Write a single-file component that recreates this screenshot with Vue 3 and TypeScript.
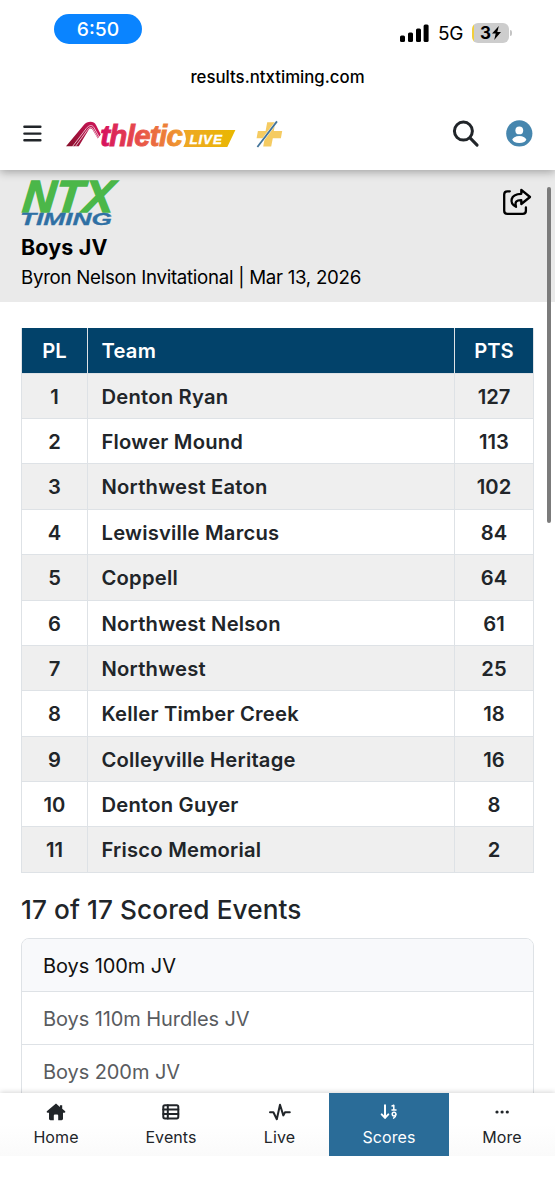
<script setup lang="ts">
interface TeamScore {
  team: string
  pts: number
}

const teams: TeamScore[] = [
  { team: 'Denton Ryan', pts: 127 },
  { team: 'Flower Mound', pts: 113 },
  { team: 'Northwest Eaton', pts: 102 },
  { team: 'Lewisville Marcus', pts: 84 },
  { team: 'Coppell', pts: 64 },
  { team: 'Northwest Nelson', pts: 61 },
  { team: 'Northwest', pts: 25 },
  { team: 'Keller Timber Creek', pts: 18 },
  { team: 'Colleyville Heritage', pts: 16 },
  { team: 'Denton Guyer', pts: 8 },
  { team: 'Frisco Memorial', pts: 2 },
]

const events: string[] = ['Boys 100m JV', 'Boys 110m Hurdles JV', 'Boys 200m JV']
</script>

<template>
  <div class="screen">
    <div class="status">
      <span class="clock">6:50</span>
      <div class="status-right">
        <svg class="signal" width="29" height="19" viewBox="0 0 29 19">
          <rect x="0" y="11.5" width="5" height="6.5" rx="1.5" />
          <rect x="8" y="8.5" width="5" height="9.5" rx="1.5" />
          <rect x="16" y="4.5" width="5" height="13.5" rx="1.5" />
          <rect x="23.6" y="0.5" width="5" height="17.5" rx="1.5" />
        </svg>
        <span class="network">5G</span>
        <span class="battery">
          <span>3</span>
          <svg width="9" height="14" viewBox="0 0 9 14"><path d="M6.8 0 0 7.6h3.7L2.2 14 9 6H5.3z" /></svg>
        </span>
        <span class="battery-cap"></span>
      </div>
    </div>
    <div class="url">results.ntxtiming.com</div>

    <header class="topbar">
      <svg class="burger" width="20" height="17" viewBox="0 0 20 17">
        <path d="M2.4 1.7h16M2.4 8.6h16M2.4 15.2h16" />
      </svg>
      <svg class="brand" width="172" height="42" viewBox="0 -5 172 42">
        <defs>
          <linearGradient id="brandText" gradientUnits="userSpaceOnUse" x1="36" y1="0" x2="118" y2="0">
            <stop offset="0" stop-color="#d6125e" />
            <stop offset="0.45" stop-color="#e8504a" />
            <stop offset="1" stop-color="#f0a02c" />
          </linearGradient>
          <linearGradient id="brandMark" gradientUnits="userSpaceOnUse" x1="0" y1="28" x2="36" y2="8">
            <stop offset="0" stop-color="#86102a" />
            <stop offset="1" stop-color="#d3155c" />
          </linearGradient>
          <linearGradient id="brandTag" x1="0" y1="0" x2="1" y2="0">
            <stop offset="0" stop-color="#efa726" />
            <stop offset="1" stop-color="#e9b800" />
          </linearGradient>
        </defs>
        <path
          d="M0 28.2 17.8 7.1C21.3 2.8 28 2.8 30 7L34.8 16.4 31.8 20.4 26.4 11.6C25.3 9.9 23.8 10.1 22.7 11.8L12.8 28.2Z"
          fill="url(#brandMark)"
        />
        <path d="M6.5 28.5 20.2 10.6C23 6.9 26.2 6.5 28 9.7L33.3 19.2" class="lane" />
        <path d="M9.4 28.5 21.2 12.1C23.3 9.2 25.7 8.7 27.1 11.2L32 19.8" class="lane" />
        <path d="M117.3 12H169.4L161.3 29H117.3Q122.5 20.5 117.3 12Z" fill="url(#brandTag)" />
        <text x="34.2" y="27.7" class="brand-name">thletic</text>
        <text x="123.4" y="26" class="brand-tag">LIVE</text>
      </svg>
      <svg class="plus" width="28" height="28" viewBox="0 0 28 28">
        <path d="M11.2 1.2h8.2l-1.6 8.9h8.4l-1.3 7.2h-8.1L15.2 25.6H7.2l1.5-8.3H.6l1.3-7.2h7.7z" fill="#f5cb62" />
        <path d="M20.6.8 2 25.4" class="slash-gap" />
        <path d="M21 .4 1.4 26" class="slash" />
      </svg>
      <svg class="search" width="28" height="28" viewBox="0 0 28 28">
        <circle cx="11.4" cy="11.1" r="9" />
        <path d="m18 17.9 7.1 7.2" />
      </svg>
      <svg class="avatar" width="27" height="27" viewBox="0 0 27 27">
        <circle cx="13.3" cy="13.4" r="13.1" fill="#4686ae" />
        <circle cx="13.3" cy="10.4" r="3.9" fill="#fff" />
        <ellipse cx="13.3" cy="19.6" rx="6.9" ry="3.5" fill="#fff" />
      </svg>
    </header>

    <main class="content">
      <section class="meet">
        <div class="meet-text">
          <svg class="club" width="100" height="51" viewBox="0 0 100 51">
            <text x="0" y="0" class="club-name" transform="translate(0.5 36.8) skewX(-6)" textLength="91" lengthAdjust="spacingAndGlyphs">NTX</text>
            <text x="0" y="0" class="club-sub" transform="translate(-1 50.3)" textLength="92" lengthAdjust="spacingAndGlyphs">TIMING</text>
          </svg>
          <h1>Boys JV</h1>
          <p>Byron Nelson Invitational | Mar 13, 2026</p>
        </div>
        <svg class="share" width="30" height="29" viewBox="0 0 30 29">
          <path d="M7.8 3.3H5.4Q2.2 3.3 2.2 6.5V22.7Q2.2 25.9 5.4 25.9H20.7Q23.9 25.9 23.9 22.7V19.5" />
          <path d="M19.3 1.9 28 9 19.3 16V12.2C14.5 12.1 12.5 13.8 14 18.8 7.2 15.4 7.6 6.1 19.3 5.8Z" />
        </svg>
      </section>

      <div class="table">
        <div class="row head">
          <span>PL</span><span class="team">Team</span><span>PTS</span>
        </div>
        <div v-for="(t, i) in teams" :key="t.team" class="row">
          <span>{{ i + 1 }}</span><span class="team">{{ t.team }}</span><span>{{ t.pts }}</span>
        </div>
      </div>

      <h2>17 of 17 Scored Events</h2>
      <div class="events">
        <div v-for="(e, i) in events" :key="e" class="event" :class="{ current: i === 0 }">{{ e }}</div>
      </div>
      <div class="scrollbar"></div>
    </main>

    <nav class="tabs">
      <a class="tab home">
        <svg width="20" height="18" viewBox="0 0 20 18">
          <path d="M10 .6.8 8.3Q.2 9.6 1.6 9.7H3V15.8Q3 17.2 4.4 17.2H7.8V12.5Q7.8 11.4 8.9 11.4H11.1Q12.2 11.4 12.2 12.5V17.2H15.6Q17 17.2 17 15.8V9.7H18.4Q19.8 9.6 19.2 8.3L16.2 5.8V2.3H13.9V3.9Z" fill="currentColor" />
        </svg>
        <span>Home</span>
      </a>
      <a class="tab evts">
        <svg width="18" height="18" viewBox="0 0 18 18" class="line">
          <rect x="1.3" y="2.2" width="15" height="13.2" rx="1.6" />
          <path d="M1.3 6.6h15M1.3 11h15M5.8 2.2v13.2" />
        </svg>
        <span>Events</span>
      </a>
      <a class="tab live">
        <svg width="22" height="18" viewBox="0 0 22 18" class="line">
          <path d="M1 9.3H4.4L7.8 16.2 11 1.7 14.3 12.4 16 9.3H20.8" />
        </svg>
        <span>Live</span>
      </a>
      <a class="tab scores">
        <svg width="18" height="18" viewBox="0 0 18 18" class="line">
          <path d="M5 2.2V14.6M1.7 11.4 5 14.9 8.3 11.4" />
          <path d="M12 3 13.8 2.2V6.8M12 6.9H16" class="thin" />
          <circle cx="14" cy="11.1" r="1.8" class="thin" />
          <path d="M15.9 11.3Q15.8 13.9 13.6 15.2" class="thin" />
        </svg>
        <span>Scores</span>
      </a>
      <a class="tab more">
        <svg width="18" height="18" viewBox="0 0 18 18">
          <g fill="currentColor"><circle cx="4" cy="9" r="1.6" /><circle cx="9.1" cy="9" r="1.6" /><circle cx="14.3" cy="9" r="1.6" /></g>
        </svg>
        <span>More</span>
      </a>
    </nav>
  </div>
</template>

<style>
html,
body {
  margin: 0;
  background: #fff;
}
</style>

<style scoped>
.screen {
  width: 555px;
  height: 1200px;
  overflow: hidden;
  display: flex;
  flex-direction: column;
  background: #fff;
  color: #212529;
  font-family: Inter, 'Liberation Sans', sans-serif;
}
svg {
  display: block;
  flex: none;
  overflow: visible;
}
.status {
  height: 60px;
  display: flex;
  justify-content: space-between;
  align-items: flex-start;
  box-sizing: border-box;
  padding: 14px 43px 0 54px;
}
.clock {
  width: 88px;
  height: 30px;
  line-height: 31px;
  border-radius: 15px;
  background: #0a84ff;
  color: #fff;
  text-align: center;
  font-size: 19.3px;
  font-weight: 500;
}
.status-right {
  display: flex;
  align-items: center;
  height: 38px;
  color: #000;
}
.signal {
  margin-right: 9px;
}
.network {
  width: 26px;
  margin-right: 8px;
  font-size: 19px;
  line-height: 24px;
  padding-top: 1px;
  letter-spacing: -0.4px;
}
.battery {
  width: 37px;
  height: 20px;
  border-radius: 6px;
  background: linear-gradient(to right, #f2cf3a 2px, #cdcdcd 2px);
  display: flex;
  align-items: center;
  justify-content: center;
  gap: 1px;
  font-size: 17px;
  font-weight: 700;
}
.battery-cap {
  width: 2px;
  height: 6px;
  margin-left: 1px;
  border-radius: 0 2px 2px 0;
  background: #c4c4c4;
}
.url {
  height: 35px;
  line-height: 35px;
  text-align: center;
  font-size: 16.8px;
  font-weight: 500;
  color: #000;
}
.topbar {
  position: relative;
  z-index: 2;
  height: 75px;
  box-sizing: border-box;
  padding: 2px 22px 0 22px;
  display: flex;
  align-items: center;
  background: #fff;
  box-shadow: 0 2px 9px rgba(0, 0, 0, 0.32);
  clip-path: inset(0 0 -16px 0);
}
.burger {
  margin-right: 24px;
}
.burger path,
.search path,
.search circle {
  fill: none;
  stroke: #212529;
  stroke-width: 2.4;
  stroke-linecap: round;
}
.brand {
  margin-right: 18px;
}
.lane {
  fill: none;
  stroke: #fff;
  stroke-width: 0.7;
}
.brand-name {
  font: italic 700 29.5px 'Liberation Sans', sans-serif;
  letter-spacing: -0.7px;
  fill: url(#brandText);
  stroke: url(#brandText);
  stroke-width: 0.9;
}
.brand-tag {
  font: italic 700 13.4px 'Liberation Sans', sans-serif;
  letter-spacing: 0.9px;
  fill: #fff;
  stroke: #fff;
  stroke-width: 0.4;
}
.slash-gap {
  stroke: #fff;
  stroke-width: 2.6;
}
.slash {
  stroke: #42749a;
  stroke-width: 1.8;
}
.plus {
  position: relative;
  top: 1px;
}
.search {
  margin-left: auto;
  margin-right: 26px;
}
.search circle,
.search path {
  stroke-width: 3;
}
.content {
  position: relative;
  height: 923px;
  overflow: hidden;
}
.meet {
  height: 132px;
  box-sizing: border-box;
  padding: 5px 23px 0 21px;
  display: flex;
  justify-content: space-between;
  background: #eaeaea;
  color: #000;
}
.club-name {
  font: italic 700 45px 'Liberation Sans', sans-serif;
  fill: #4bb749;
  stroke: #4bb749;
  stroke-width: 1.4;
}
.club-sub {
  font: italic 700 17.2px 'Liberation Sans', sans-serif;
  fill: #2f70a4;
  stroke: #2f70a4;
  stroke-width: 0.3;
}
h1 {
  margin: 3px 0 0;
  font-size: 21.4px;
  line-height: 36px;
  font-weight: 700;
  letter-spacing: 0.2px;
}
p {
  margin: 1px 0 0;
  font-size: 18.7px;
  line-height: 24px;
  letter-spacing: -0.28px;
  white-space: nowrap;
}
.share {
  margin-top: 13px;
}
.share path {
  fill: none;
  stroke: #000;
  stroke-width: 2.3;
  stroke-linejoin: round;
  stroke-linecap: round;
}
.table {
  margin: 26.4px 21px 0;
  border-left: 1px solid #dee2e6;
  border-right: 1px solid #dee2e6;
}
.row {
  display: grid;
  grid-template-columns: 65px 368px 1fr;
  height: 45.36px;
  box-sizing: border-box;
  border-bottom: 1px solid #dee2e6;
  font-size: 20.2px;
  line-height: 46.6px;
  font-weight: 600;
  text-align: center;
}
.row span {
  height: 44.36px;
}
.row:nth-child(even) {
  background: #efefef;
}
.row .team {
  box-sizing: border-box;
  padding-left: 13.5px;
  border-left: 1px solid #dee2e6;
  border-right: 1px solid #dee2e6;
  text-align: left;
  letter-spacing: 0.22px;
}
.row.head {
  background: #02426a;
  color: #fff;
}
h2 {
  margin: 19px 21px 10px;
  font-size: 26.2px;
  line-height: 36px;
  font-weight: 450;
  letter-spacing: 0.08px;
}
.events {
  margin: 0 21px;
  border: 1px solid #dee2e6;
  border-radius: 8px 8px 0 0;
  overflow: hidden;
}
.event {
  height: 53.2px;
  box-sizing: border-box;
  padding-left: 21px;
  border-bottom: 1px solid #dee2e6;
  font-size: 20px;
  line-height: 54.6px;
  letter-spacing: -0.08px;
  color: #595c5f;
}
.event.current {
  background: #f8f9fb;
  color: #111;
}
.scrollbar {
  position: absolute;
  right: 4px;
  top: 17px;
  width: 4px;
  height: 336px;
  border-radius: 2px;
  background: #7b7b7b;
}
.tabs {
  position: relative;
  z-index: 2;
  height: 63px;
  display: grid;
  grid-template-columns: 112px 118px 99px 120px 106px;
  background: linear-gradient(#fff 50%, #fafafa);
  box-shadow: 0 -1px 5px rgba(0, 0, 0, 0.16);
  clip-path: inset(-8px 0 0 0);
}
.tab {
  display: flex;
  flex-direction: column;
  align-items: center;
  padding-top: 10px;
  font-size: 16px;
  line-height: 20px;
  letter-spacing: 0.1px;
}
.tab span {
  margin-top: 6px;
}
.tab.scores {
  background: #2a6c98;
  color: #fff;
}
.line {
  fill: none;
  stroke: currentColor;
  stroke-width: 2;
  stroke-linecap: round;
  stroke-linejoin: round;
}
.thin {
  stroke-width: 1.5;
}
</style>
